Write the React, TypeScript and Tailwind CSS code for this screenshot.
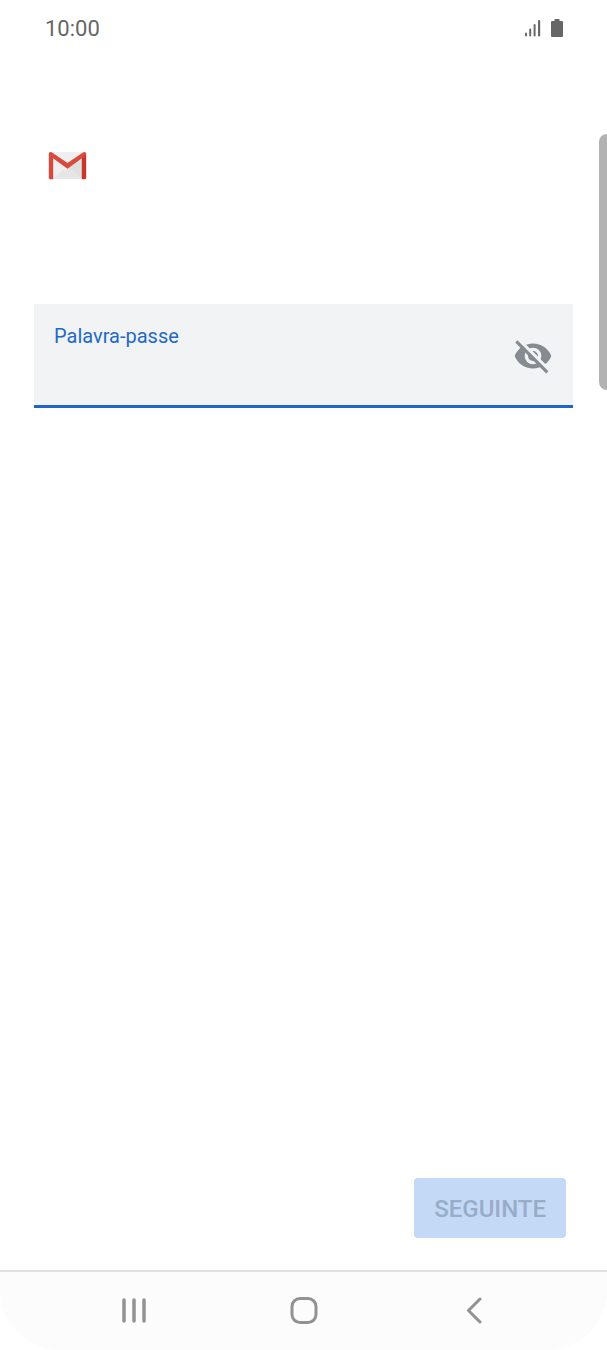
import { useState } from 'react'

function SignalIcon() {
  return (
    <svg width="16" height="18" viewBox="0 0 16 18" fill="#6a6a6a" aria-hidden="true">
      <rect x="0" y="13.500" width="2" height="4" rx="1" />
      <rect x="4.200" y="9.500" width="2" height="8" rx="1" />
      <rect x="8.600" y="5" width="2" height="12.500" rx="1" />
      <rect x="13" y="1" width="2.200" height="16.500" rx="1" />
    </svg>
  )
}

function BatteryIcon() {
  return (
    <svg width="12" height="18" viewBox="0 0 12 18" fill="#666666" aria-hidden="true">
      <path d="M3.500 0h5v2H11a1 1 0 0 1 1 1v14a1 1 0 0 1-1 1H1a1 1 0 0 1-1-1V3a1 1 0 0 1 1-1h2.500z" />
    </svg>
  )
}

function GmailLogo() {
  return (
    <svg width="39" height="28" viewBox="0 0 39 28" role="img" aria-label="Gmail">
      <rect x="1" width="37" height="27" rx="1.500" fill="#e8e8e8" />
      <path d="M5 7 19.500 16.500 5 27z" fill="#efefef" />
      <path d="M34 7 19.500 16.500 34 27z" fill="#e0e0e0" />
      <path d="M5 27 15 17.500l4.500 2 4.500-2L34 27z" fill="#e6e6e6" />
      <path d="M3 0h33L19.500 10.500z" fill="#efefef" />
      <path d="M.8 2 5.200 5.500V27.200H2.300a1.500 1.500 0 0 1-1.500-1.500z" fill="#d54b3d" />
      <path d="M38.200 2 33.800 5.500V27.200h2.900a1.500 1.500 0 0 0 1.500-1.500z" fill="#c5392d" />
      <path d="M.8 1.800C.8.700 1.600 0 2.500 0c.6 0 1.100.2 1.500.5L19.500 11 35 .5c.4-.3.900-.5 1.500-.5.900 0 1.700.7 1.700 1.800 0 .8-.3 1.400-.9 1.900L19.500 16.800 1.700 3.700C1.100 3.200.8 2.600.8 1.800z" fill="#d9493c" />
    </svg>
  )
}

function EyeOffIcon() {
  return (
    <svg width="40" height="40" viewBox="0 0 24 24" aria-hidden="true">
      <path
        fillRule="evenodd"
        fill="#868b91"
        d="M12 4.500C7 4.500 2.730 7.610 1 12c1.730 4.390 6 7.500 11 7.500s9.270-3.110 11-7.500c-1.730-4.390-6-7.500-11-7.500zM12 17a5 5 0 1 1 0-10 5 5 0 0 1 0 10zm0-8a3 3 0 1 0 0 6 3 3 0 0 0 0-6z"
      />
      <path d="M3.400 2.200 22.200 21" stroke="#f1f3f5" strokeWidth="2" />
      <path d="M2 3.200 20.600 21.800" stroke="#868b91" strokeWidth="1.900" />
    </svg>
  )
}

function StatusBar() {
  return (
    <header className="flex h-14 items-center justify-between px-11 text-[#666666]">
      <span className="pt-0.5 pl-px text-[22px] leading-8">10:00</span>
      <div className="flex items-center gap-2.5">
        <SignalIcon />
        <BatteryIcon />
      </div>
    </header>
  )
}

function PasswordField() {
  const [visible, setVisible] = useState(false)

  return (
    <div className="flex h-26 items-center border-b-3 border-[#1f66c8] bg-[#f1f3f5] px-5 pt-0.5">
      <div className="flex flex-1 flex-col">
        <label htmlFor="password" className="text-xl leading-6 text-[#2369c5]">
          Palavra-passe
        </label>
        <input
          id="password"
          type={visible ? 'text' : 'password'}
          className="h-10 w-full bg-transparent text-xl text-[#202124] outline-none"
        />
      </div>
      <button
        type="button"
        aria-label="Mostrar palavra-passe"
        aria-pressed={visible}
        onClick={() => setVisible(!visible)}
      >
        <EyeOffIcon />
      </button>
    </div>
  )
}

function NavigationBar() {
  return (
    <nav className="flex h-20 items-center justify-center gap-[122px] rounded-b-[60px] border-t-2 border-[#e2e2e2] bg-[#fcfcfc] text-[#929292]">
      <button type="button" aria-label="Recentes" className="flex w-12 justify-center">
        <svg width="26" height="28" viewBox="0 0 26 28" stroke="currentColor" strokeWidth="3.500" strokeLinecap="round">
          <path d="M3 3v21M13 3v21M23 3v21" />
        </svg>
      </button>
      <button type="button" aria-label="Início" className="flex w-12 justify-center">
        <svg width="28" height="28" viewBox="0 0 28 28" fill="none" stroke="currentColor" strokeWidth="3">
          <rect x="2" y="1.500" width="24" height="24" rx="8" />
        </svg>
      </button>
      <button type="button" aria-label="Voltar" className="flex w-12 justify-center">
        <svg width="16" height="28" viewBox="0 0 16 28" fill="none" stroke="currentColor" strokeWidth="3" strokeLinecap="round" strokeLinejoin="round">
          <path d="M14 2 2.500 13.500 14 25" />
        </svg>
      </button>
    </nav>
  )
}

export default function App() {
  return (
    <div className="relative flex min-h-screen flex-col bg-white font-['Roboto',sans-serif]">
      <StatusBar />

      {/* scroll indicator, drawn over the page */}
      <div className="absolute top-[134px] right-0 h-64 w-2 rounded-l-lg bg-[#b2b2b2]" />

      <main className="flex flex-1 flex-col px-[34px] pt-24">
        <div className="pl-[14px]">
          <GmailLogo />
        </div>

        <form className="flex flex-1 flex-col pt-31" onSubmit={(e) => e.preventDefault()}>
          <PasswordField />
          <div className="mt-auto mb-8 flex justify-end pr-[7px]">
            <button
              type="submit"
              disabled
              className="h-[60px] rounded-sm bg-[#c4d9f6] px-5 pt-0.5 text-2xl font-medium text-[#98acc8]"
            >
              SEGUINTE
            </button>
          </div>
        </form>
      </main>

      <NavigationBar />
    </div>
  )
}
